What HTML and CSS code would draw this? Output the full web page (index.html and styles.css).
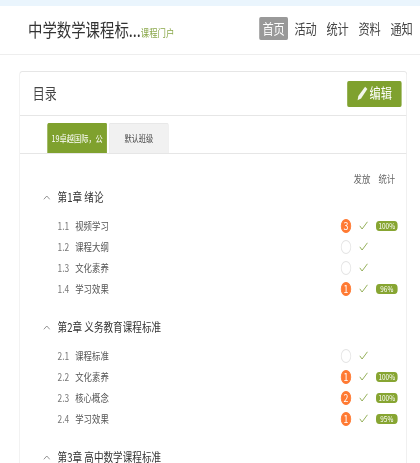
FILE: index.html
```html
<!DOCTYPE html>
<html lang="zh-CN">
  <head>
    <meta charset="utf-8" />
    <title>课程门户</title>
    <link rel="stylesheet" href="styles.css">
  </head>
  <body>
    <div class="frame">
      <div class="page">
        <div class="topband"></div>
        <header class="site-header">
          <div class="brand">
            <span class="brand-title">中学数学课程标...</span>
            <span class="brand-sub">课程门户</span>
          </div>
          <nav class="nav">
            <a class="nav-item active" href="#">首页</a>
            <a class="nav-item" href="#">活动</a>
            <a class="nav-item" href="#">统计</a>
            <a class="nav-item" href="#">资料</a>
            <a class="nav-item" href="#">通知</a>
          </nav>
        </header>

        <main class="card">
          <div class="card-head">
            <h1>目录</h1>
            <a class="btn-edit" href="#">
              <svg width="14" height="15" viewBox="0 0 14 15"><path d="M10.4.8l2.8 2.2-7.9 9.6-4.3 1.7.9-4.3z" fill="#fff" opacity=".9"/></svg>
              <span>编辑</span>
            </a>
          </div>

          <div class="tabs">
            <a class="tab on" href="#">19卓越国际，公</a>
            <a class="tab" href="#">默认班级</a>
          </div>

          <div class="toc">
            <div class="toc-cols"><span>发放</span><span>统计</span></div>

            <section class="chapter">
              <h2><svg class="caret" width="9" height="5" viewBox="0 0 9 5"><path d="M.7 4.4L4.5 1l3.8 3.4" fill="none" stroke="#888"/></svg>第1章 绪论</h2>
              <ul>
                <li><span class="num">1.1</span><span class="name">视频学习</span><span class="dot hot">3</span><svg class="tick" width="11" height="9" viewBox="0 0 11 9"><path d="M.7 4.8L3.6 8l6.7-7.2" fill="none" stroke="#8aa84a"/></svg><span class="pct">100%</span></li>
                <li><span class="num">1.2</span><span class="name">课程大纲</span><span class="dot"></span><svg class="tick" width="11" height="9" viewBox="0 0 11 9"><path d="M.7 4.8L3.6 8l6.7-7.2" fill="none" stroke="#8aa84a"/></svg></li>
                <li><span class="num">1.3</span><span class="name">文化素养</span><span class="dot"></span><svg class="tick" width="11" height="9" viewBox="0 0 11 9"><path d="M.7 4.8L3.6 8l6.7-7.2" fill="none" stroke="#8aa84a"/></svg></li>
                <li><span class="num">1.4</span><span class="name">学习效果</span><span class="dot hot">1</span><svg class="tick" width="11" height="9" viewBox="0 0 11 9"><path d="M.7 4.8L3.6 8l6.7-7.2" fill="none" stroke="#8aa84a"/></svg><span class="pct">96%</span></li>
              </ul>
            </section>

            <section class="chapter">
              <h2><svg class="caret" width="9" height="5" viewBox="0 0 9 5"><path d="M.7 4.4L4.5 1l3.8 3.4" fill="none" stroke="#888"/></svg>第2章 义务教育课程标准</h2>
              <ul>
                <li><span class="num">2.1</span><span class="name">课程标准</span><span class="dot"></span><svg class="tick" width="11" height="9" viewBox="0 0 11 9"><path d="M.7 4.8L3.6 8l6.7-7.2" fill="none" stroke="#8aa84a"/></svg></li>
                <li><span class="num">2.2</span><span class="name">文化素养</span><span class="dot hot">1</span><svg class="tick" width="11" height="9" viewBox="0 0 11 9"><path d="M.7 4.8L3.6 8l6.7-7.2" fill="none" stroke="#8aa84a"/></svg><span class="pct">100%</span></li>
                <li><span class="num">2.3</span><span class="name">核心概念</span><span class="dot hot">2</span><svg class="tick" width="11" height="9" viewBox="0 0 11 9"><path d="M.7 4.8L3.6 8l6.7-7.2" fill="none" stroke="#8aa84a"/></svg><span class="pct">100%</span></li>
                <li><span class="num">2.4</span><span class="name">学习效果</span><span class="dot hot">1</span><svg class="tick" width="11" height="9" viewBox="0 0 11 9"><path d="M.7 4.8L3.6 8l6.7-7.2" fill="none" stroke="#8aa84a"/></svg><span class="pct">95%</span></li>
              </ul>
            </section>

            <section class="chapter">
              <h2><svg class="caret" width="9" height="5" viewBox="0 0 9 5"><path d="M.7 4.4L4.5 1l3.8 3.4" fill="none" stroke="#888"/></svg>第3章 高中数学课程标准</h2>
            </section>
          </div>
        </main>
      </div>
    </div>
  </body>
</html>
```

FILE: styles.css
```css
html, body {
  height: 463px;
  overflow: hidden;
}

body {
  margin: 0;
  background: #fff;
  color: #333;
  font-family: "Noto Sans CJK SC", "Liberation Sans", sans-serif;
}

a {
  color: inherit;
  text-decoration: none;
}

.frame {
  width: 420px;
  height: 463px;
  overflow: hidden;
}

/* the page is squeezed sideways, a 525px layout in a 420px window */
.page {
  width: 525px;
  transform: scaleX(.8);
  transform-origin: 0 0;
  filter: blur(.35px);
}

.topband {
  height: 6px;
  background: #eaf5fd;
}

.site-header {
  display: flex;
  align-items: center;
  justify-content: space-between;
  box-sizing: border-box;
  height: 49px;
  padding: 0 9px 3px 35px;
  border-bottom: 1px solid #eee;
}

.brand {
  display: flex;
  align-items: baseline;
}

.brand-title {
  font-size: 18px;
  color: #333;
}

.brand-sub {
  font-size: 10.5px;
  color: #8aa84a;
}

.nav {
  display: flex;
  gap: 12px;
  white-space: nowrap;
}

.nav-item {
  height: 23px;
  line-height: 22px;
  font-size: 14px;
  color: #444;
  border-radius: 2px;
}

.nav-item.active {
  padding: 0 4px;
  margin: 0 -4px;
  background: #999;
  color: #fff;
}

.card {
  margin: 16px 16px 0 24px;
  border: 1px solid #e6e6e6;
  border-bottom: 0;
  border-radius: 4px 4px 0 0;
}

.card-head {
  display: flex;
  align-items: center;
  justify-content: space-between;
  height: 43px;
  padding: 0 6px 0 16px;
  border-bottom: 1px solid #e6e6e6;
}

.card-head h1 {
  margin: 0 0 3px;
  font-size: 15px;
  font-weight: 400;
  color: #444;
}

.btn-edit {
  display: flex;
  align-items: center;
  justify-content: center;
  gap: 2px;
  width: 68px;
  height: 26px;
  border-radius: 2px;
  background: #7fa12e;
  color: #fff;
  font-size: 14px;
}

.btn-edit span {
  margin-bottom: 3px;
}

.tabs {
  display: flex;
  gap: 2px;
  height: 30px;
  padding: 7px 0 0 34px;
  border-bottom: 1px solid #e6e6e6;
}

.tab {
  width: 75px;
  height: 30px;
  line-height: 30px;
  box-sizing: border-box;
  border: 1px solid #e8e8e8;
  border-bottom: 0;
  background: #f1f1f1;
  border-radius: 2px 2px 0 0;
  text-align: center;
  font-size: 9px;
  color: #444;
}

.tab.on {
  border-color: #7fa12e;
  background: #7fa12e;
  color: #fff;
  white-space: nowrap;
  overflow: hidden;
}

.toc {
  padding: 17px 11px 0 29px;
}

.toc-cols {
  display: flex;
  justify-content: flex-end;
  gap: 10px;
  height: 16px;
  padding-right: 3px;
  line-height: 16px;
  font-size: 10.5px;
  color: #666;
}

.chapter h2 {
  display: flex;
  align-items: center;
  height: 20px;
  margin: 0;
  font-size: 12px;
  line-height: 1;
  font-weight: 400;
  color: #333;
}

.caret {
  margin-right: 9px;
}

.chapter ul {
  list-style: none;
  margin: 0 0 18px;
  padding: 8px 0 0 18px;
}

.chapter li {
  display: grid;
  grid-template-columns: 22px 1fr 13px 21px 37px;
  align-items: center;
  height: 21px;
  font-size: 10.5px;
  color: #555;
}

.num {
  color: #777;
}

.dot {
  box-sizing: border-box;
  height: 14px;
  border: 1.5px solid #e4e4e4;
  border-radius: 50%;
  text-align: center;
  line-height: 11px;
  color: #fff;
  font-size: 11px;
}

.dot.hot {
  border-color: #ff7a33;
  background: #ff7a33;
}

.tick {
  justify-self: end;
}

.pct {
  justify-self: end;
  width: 27px;
  height: 10px;
  border-radius: 4px;
  background: #87a532;
  color: #fff;
  font-size: 8px;
  line-height: 10px;
  text-align: center;
}
```
